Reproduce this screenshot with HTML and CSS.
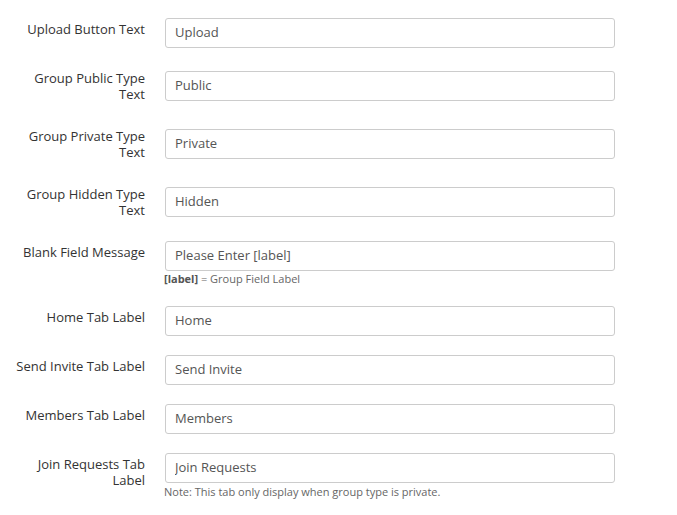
FILE: index.html
```html
<!DOCTYPE html>
<html>
<head>
<meta charset="utf-8">
<link rel="stylesheet" href="styles.css">
</head>
<body>
<form class="form">
  <div class="row r-first">
    <label class="label">Upload Button Text</label>
    <div class="field"><input class="input" type="text" value="Upload"></div>
  </div>
  <div class="row r-two">
    <label class="label label-tight">Group Public Type Text</label>
    <div class="field"><input class="input" type="text" value="Public"></div>
  </div>
  <div class="row r-two">
    <label class="label label-tight">Group Private Type Text</label>
    <div class="field"><input class="input" type="text" value="Private"></div>
  </div>
  <div class="row r-first">
    <label class="label label-tight">Group Hidden Type Text</label>
    <div class="field"><input class="input" type="text" value="Hidden"></div>
  </div>
  <div class="row">
    <label class="label">Blank Field Message</label>
    <div class="field">
      <input class="input" type="text" value="Please Enter [label]">
      <div class="help help-tight"><b>[label]</b> = Group Field Label</div>
    </div>
  </div>
  <div class="row">
    <label class="label">Home Tab Label</label>
    <div class="field"><input class="input" type="text" value="Home"></div>
  </div>
  <div class="row">
    <label class="label">Send Invite Tab Label</label>
    <div class="field"><input class="input" type="text" value="Send Invite"></div>
  </div>
  <div class="row">
    <label class="label">Members Tab Label</label>
    <div class="field"><input class="input" type="text" value="Members"></div>
  </div>
  <div class="row">
    <label class="label">Join Requests Tab Label</label>
    <div class="field">
      <input class="input" type="text" value="Join Requests">
      <div class="help">Note: This tab only display when group type is private.</div>
    </div>
  </div>
</form>
</body>
</html>
```
FILE: styles.css
```css
html, body {
  margin: 0;
  padding: 0;
  background: #ffffff;
}
body {
  font-family: "Open Sans", "Liberation Sans", sans-serif;
  font-size: 13px;
  color: #333333;
}
.form {
  padding-top: 18px;
}
.row {
  display: flex;
  align-items: flex-start;
  gap: 20px;
  margin-bottom: 19px;
}
.r-first {
  margin-bottom: 23px;
}
.r-two {
  margin-bottom: 27px;
}
.label {
  box-sizing: border-box;
  width: 145px;
  flex: 0 0 145px;
  padding-left: 12px;
  text-align: right;
  line-height: 16px;
  padding-top: 3px;
  color: #333333;
}
.label-tight {
  padding-top: 0;
  margin-top: -1px;
}
.field {
  width: 450px;
  flex: 0 0 450px;
}
.input {
  display: block;
  box-sizing: border-box;
  width: 450px;
  height: 30px;
  margin: 0;
  padding: 0 9px 2px;
  border: 1px solid #cccccc;
  border-radius: 3px;
  font-family: "Open Sans", "Liberation Sans", sans-serif;
  font-size: 13px;
  color: #555555;
  background: #ffffff;
  outline: none;
}
.help {
  font-size: 11px;
  line-height: 16px;
  color: #666666;
  margin-top: 1px;
  margin-left: -1px;
}
.help-tight {
  margin-top: 0;
}
.help b {
  font-weight: 700;
  color: #555555;
}
```
